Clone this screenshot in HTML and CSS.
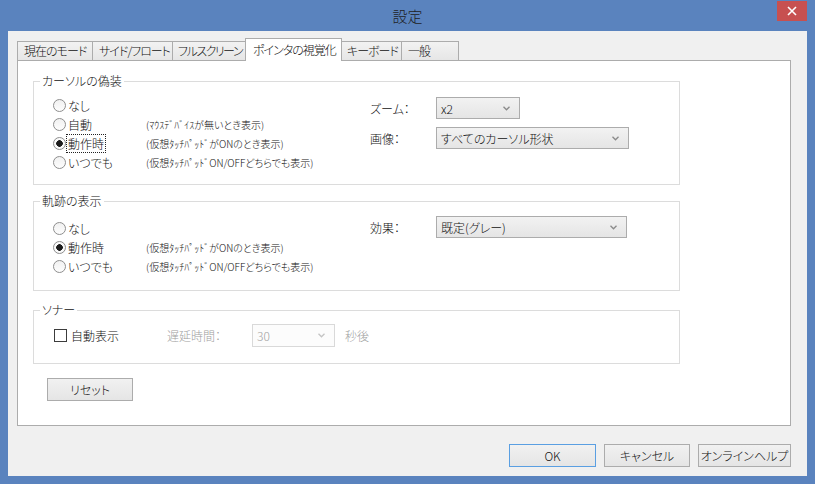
FILE: index.html
```html
<!DOCTYPE html>
<html lang="ja">
<head>
<meta charset="utf-8">
<title>設定</title>
<link rel="stylesheet" href="styles.css">
</head>
<body>
<div class="window">
  <div class="titlebar">
    <span class="title">設定</span>
    <button class="close" aria-label="閉じる">
      <svg width="10" height="10" viewBox="0 0 10 10"><path d="M1 1L9 9M9 1L1 9" stroke="#fff" stroke-width="1.6" fill="none"/></svg>
    </button>
  </div>
  <div class="client">
    <div class="tabs">
      <div class="tab tab-mode">現在のモード</div>
      <div class="tab tab-side">サイド/フロート</div>
      <div class="tab tab-full">フルスクリーン</div>
      <div class="tab tab-pointer active">ポインタの視覚化</div>
      <div class="tab tab-key">キーボード</div>
      <div class="tab tab-general">一般</div>
    </div>
    <div class="panel">
      <fieldset class="group g1">
        <legend>カーソルの偽装</legend>
        <div class="group-body">
          <div class="radios">
            <div class="opt"><span class="choice"><span class="radio"></span><span class="lbl">なし</span></span></div>
            <div class="opt"><span class="choice"><span class="radio"></span><span class="lbl">自動</span></span><span class="desc">(ﾏｳｽﾃﾞﾊﾞｲｽが無いとき表示)</span></div>
            <div class="opt"><span class="choice"><span class="radio on"></span><span class="lbl focus">動作時</span></span><span class="desc">(仮想ﾀｯﾁﾊﾟｯﾄﾞがONのとき表示)</span></div>
            <div class="opt"><span class="choice"><span class="radio"></span><span class="lbl">いつでも</span></span><span class="desc">(仮想ﾀｯﾁﾊﾟｯﾄﾞON/OFFどちらでも表示)</span></div>
          </div>
          <div class="fields">
            <span class="flabel">ズーム：</span>
            <div class="combo combo-s"><span>x2</span><svg class="chev" width="7" height="5" viewBox="0 0 7 5"><path d="M0.5 0.8L3.5 3.8L6.5 0.8" stroke="#8a8a8a" stroke-width="1.3" fill="none"/></svg></div>
            <span class="flabel">画像：</span>
            <div class="combo combo-l"><span>すべてのカーソル形状</span><svg class="chev" width="7" height="5" viewBox="0 0 7 5"><path d="M0.5 0.8L3.5 3.8L6.5 0.8" stroke="#8a8a8a" stroke-width="1.3" fill="none"/></svg></div>
          </div>
        </div>
      </fieldset>

      <fieldset class="group g2">
        <legend>軌跡の表示</legend>
        <div class="group-body">
          <div class="radios">
            <div class="opt"><span class="choice"><span class="radio"></span><span class="lbl">なし</span></span></div>
            <div class="opt"><span class="choice"><span class="radio on"></span><span class="lbl">動作時</span></span><span class="desc">(仮想ﾀｯﾁﾊﾟｯﾄﾞがONのとき表示)</span></div>
            <div class="opt"><span class="choice"><span class="radio"></span><span class="lbl">いつでも</span></span><span class="desc">(仮想ﾀｯﾁﾊﾟｯﾄﾞON/OFFどちらでも表示)</span></div>
          </div>
          <div class="fields">
            <span class="flabel">効果：</span>
            <div class="combo combo-m"><span>既定(グレー)</span><svg class="chev" width="7" height="5" viewBox="0 0 7 5"><path d="M0.5 0.8L3.5 3.8L6.5 0.8" stroke="#8a8a8a" stroke-width="1.3" fill="none"/></svg></div>
          </div>
        </div>
      </fieldset>

      <fieldset class="group g3">
        <legend>ソナー</legend>
        <div class="sonar-row">
          <span class="choice"><span class="check"></span><span class="lbl">自動表示</span></span>
          <span class="muted">遅延時間：</span>
          <div class="combo combo-d"><span>30</span><svg class="chev" width="7" height="5" viewBox="0 0 7 5"><path d="M0.5 0.8L3.5 3.8L6.5 0.8" stroke="#c4c4c4" stroke-width="1.3" fill="none"/></svg></div>
          <span class="muted">秒後</span>
        </div>
      </fieldset>

      <button class="btn reset">リセット</button>
    </div>
    <div class="footer">
      <button class="btn btn-ok">OK</button>
      <button class="btn btn-cancel">キャンセル</button>
      <button class="btn btn-help">オンラインヘルプ</button>
    </div>
  </div>
</div>
</body>
</html>
```
FILE: styles.css
```css
* { box-sizing: border-box; }

body {
  margin: 0;
  font-family: "Noto Sans CJK JP", "Noto Sans", sans-serif;
  font-size: 12px;
  font-weight: 300;
  color: #111;
  font-feature-settings: "palt";
}

.window {
  width: 815px;
  height: 484px;
  background: #5a83be;
  padding: 0 8px 8px;
  display: flex;
  flex-direction: column;
}

.titlebar {
  height: 31px;
  display: grid;
  grid-template-columns: 1fr auto 1fr;
  align-items: start;
}

.title {
  grid-column: 2;
  font-size: 15px;
  line-height: 32px;
  color: #1e1e1e;
}

.close {
  grid-column: 3;
  justify-self: end;
  width: 30px;
  height: 20px;
  margin-top: 1px;
  background: #c75050;
  border: 0;
  padding: 0;
  display: flex;
  align-items: center;
  justify-content: center;
}

.client {
  flex: 1;
  background: #f0f0f0;
  padding: 7px 16px 0 9px;
  display: flex;
  flex-direction: column;
}

.tabs {
  display: flex;
  align-items: flex-end;
  height: 23px;
  margin-bottom: -1px;
  position: relative;
  z-index: 1;
}

.tab {
  flex: none;
  height: 19px;
  margin-bottom: 1px;
  padding: 0 0 0 6px;
  border: 1px solid #acacac;
  border-bottom: 0;
  background: linear-gradient(#f2f2f2, #e6e6e6);
  line-height: 18px;
  letter-spacing: -1px;
  white-space: nowrap;
  overflow: hidden;
}

.tab + .tab { margin-left: -1px; }

.tab-mode { width: 76px; }
.tab-side { width: 81px; }
.tab-full { width: 74px; letter-spacing: -1.5px; padding-left: 5px; }
.tab-pointer { width: 97px; }
.tab-key { width: 61px; padding-left: 5px; }
.tab-general { width: 58px; }

.tab.active {
  height: 23px;
  margin-bottom: 0;
  padding-left: 7px;
  background: #fff;
  line-height: 21px;
}

.panel {
  height: 366px;
  background: #fff;
  border: 1px solid #acacac;
  padding: 12px 15px;
}

.group {
  margin: 0;
  padding: 0;
  width: 647px;
  min-width: 0;
  border: 1px solid #dcdcdc;
}

.group legend {
  margin-left: 6px;
  padding: 0 2px;
  line-height: 16px;
}

.group-body { display: flex; }

.g1 .group-body { padding: 7px 0 12px 19px; }

.g2 { margin-top: 8px; }
.g2 .group-body { padding: 6px 0 14px 19px; }
.g2 .radios { padding-top: 4px; }

.g3 { margin-top: 11px; }

.radios {
  width: 317px;
  display: grid;
  grid-auto-rows: 19px;
}

.opt {
  display: grid;
  grid-template-columns: 93px auto;
  align-items: center;
}

.choice {
  display: flex;
  align-items: center;
  gap: 1px;
}

.lbl {
  padding: 0 1px;
  line-height: 17px;
}

.focus { outline: 1px dotted #222; }

.radio {
  width: 13px;
  height: 13px;
  border-radius: 50%;
  border: 1px solid #8e8e8e;
  background: linear-gradient(#f1f1f1, #fdfdfd);
}

.radio.on {
  background: radial-gradient(circle, #1c1c1c 0, #1c1c1c 3px, #fafafa 3.6px);
}

.check {
  width: 13px;
  height: 13px;
  border: 1px solid #3c3c3c;
  background: #fff;
  margin-right: 2px;
}

.desc {
  font-size: 10px;
  white-space: nowrap;
}

.fields {
  display: grid;
  grid-template-columns: 66px auto;
  row-gap: 8px;
  align-items: center;
  align-content: start;
  margin-top: 1px;
}

.combo {
  height: 22px;
  border: 1px solid #acacac;
  background: linear-gradient(#f2f2f2, #e5e5e5);
  display: flex;
  align-items: center;
  justify-content: space-between;
  padding: 0 9px 0 4px;
  white-space: nowrap;
}

.combo-s { width: 84px; }
.combo-l { width: 193px; }
.combo-m { width: 191px; }

.combo-d {
  width: 83px;
  height: 23px;
  border-color: #d9d9d9;
  background: #fcfcfc;
  color: #a0a0a0;
}

.sonar-row {
  display: grid;
  grid-template-columns: 113px 85px 93px auto;
  align-items: center;
  padding: 6px 0 16px 20px;
}

.muted { color: #a0a0a0; }

.btn {
  height: 23px;
  padding: 0;
  border: 1px solid #acacac;
  background: linear-gradient(#f1f1f1, #e5e5e5);
  font: inherit;
  font-size: 12px;
  color: #111;
}

.reset {
  display: block;
  width: 86px;
  margin: 14px 0 0 14px;
}

.footer {
  display: flex;
  justify-content: flex-end;
  gap: 8px;
  margin-top: 18px;
}

.btn-ok { width: 87px; border-color: #5a9fe2; }
.btn-cancel { width: 86px; }
.btn-help { width: 93px; }
```
